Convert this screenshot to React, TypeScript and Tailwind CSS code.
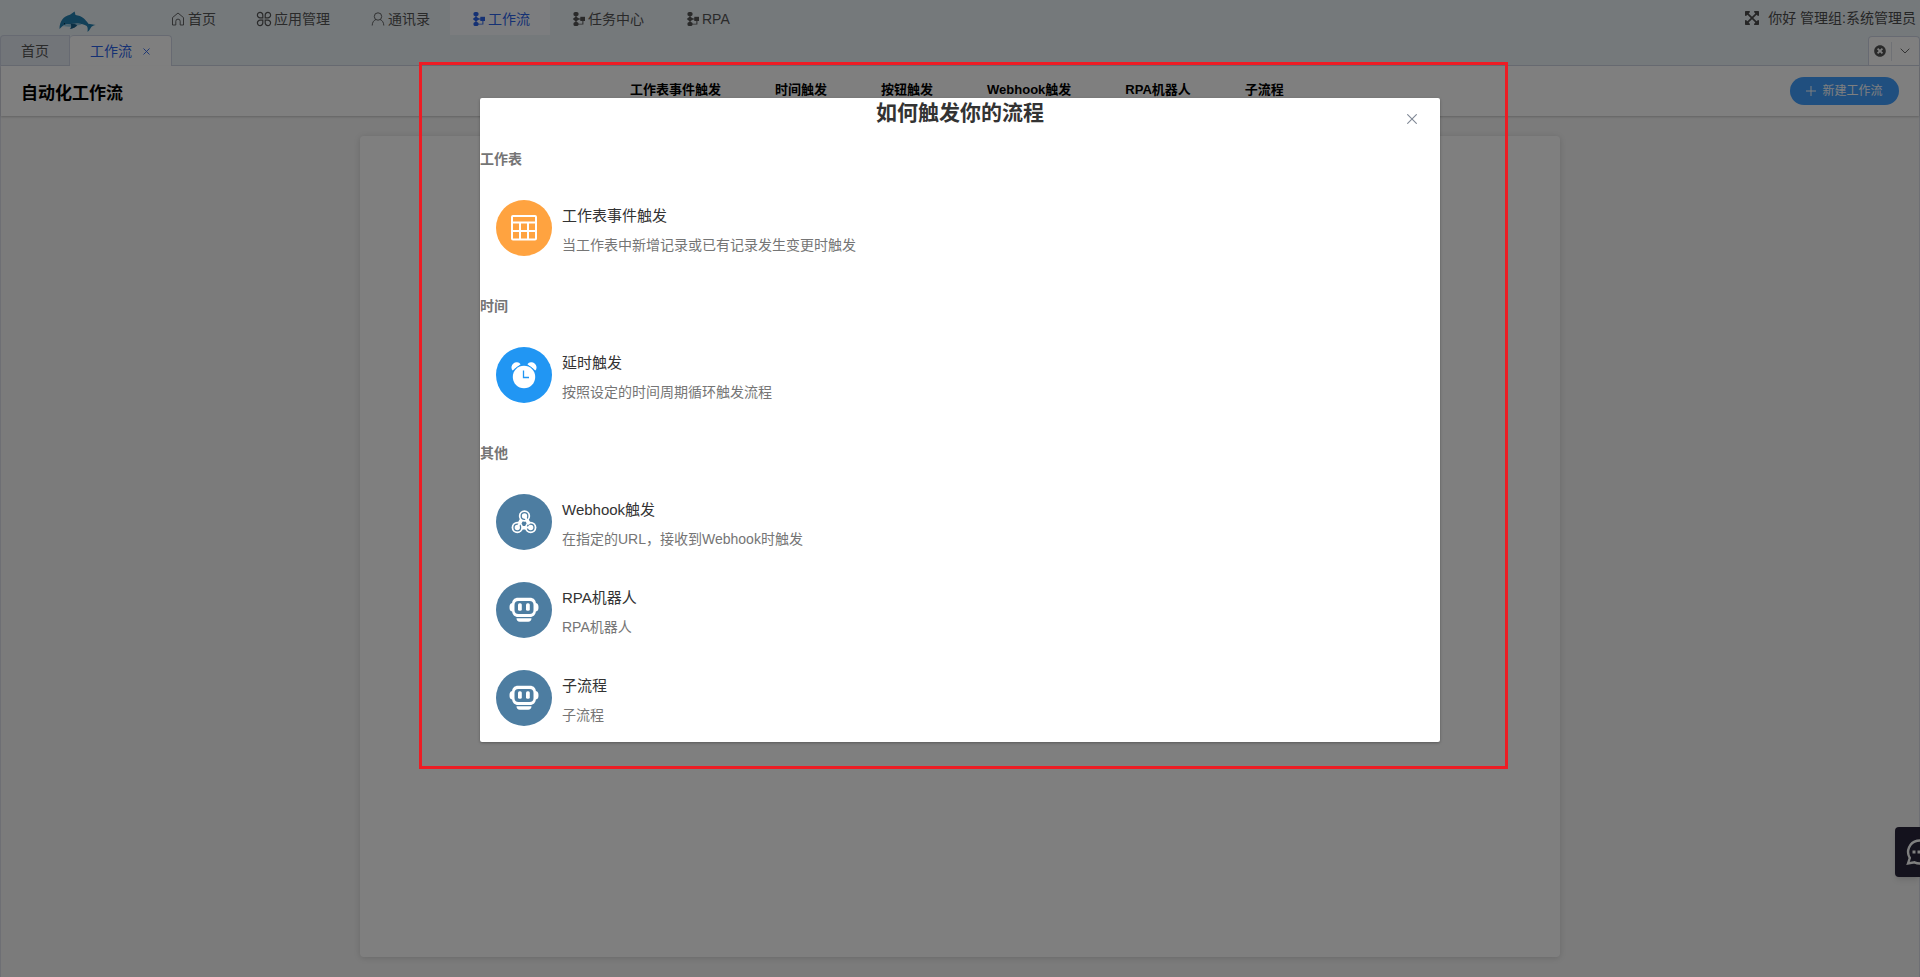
import type { ReactNode } from "react";
import { FaExpandArrowsAlt, FaTimesCircle } from "react-icons/fa";

function HomeIcon() {
  return (
    <svg width="14" height="14" viewBox="0 0 14 14" fill="none" stroke="currentColor" strokeWidth=".9">
      <path d="M4.800 13H1.500V5.600L7 1l5.500 4.600V13H9.200V9.300a2.200 2.200 0 0 0-4.400 0z" />
    </svg>
  );
}

function AppsIcon() {
  return (
    <svg width="16" height="16" viewBox="0 0 16 16" fill="none" stroke="currentColor" strokeWidth="1.200">
      <path d="M6.800 6.800H4.200a2.700 2.700 0 1 1 2.600-2.600zM9.200 6.800V4.200a2.700 2.700 0 1 1 2.600 2.600zM6.800 9.200v2.600a2.700 2.700 0 1 1-2.600-2.600zM9.200 9.200h2.600a2.700 2.700 0 1 1-2.600 2.600z" />
    </svg>
  );
}

function UserIcon() {
  return (
    <svg width="14" height="14" viewBox="0 0 14 14" fill="none" stroke="currentColor" strokeWidth=".9">
      <circle cx="7" cy="4.500" r="3.700" />
      <path d="M4.800 7.600C2.600 8.500 1.300 10.500 1.200 13.500M9.200 7.600c2.200.900 3.500 2.900 3.600 5.900" />
    </svg>
  );
}

function FlowIcon() {
  return (
    <svg width="14" height="14" viewBox="0 0 14 14" fill="currentColor">
      <rect x="2.500" y="0" width="5" height="4" rx="1.600" />
      <path d="M5 4.200 8.300 7 5 9.800 1.800 7z" />
      <rect x="2.500" y="10" width="5" height="4" rx="1.600" />
      <rect x="9.300" y="4.800" width="4.700" height="4.200" />
      <path d="M4.500 2h1v10h-1zM7 6.500h3v1H7zM11.400 8h1v4.600H7v-.900h4.400z" />
    </svg>
  );
}

function Dolphin() {
  return (
    <svg width="38" height="22" viewBox="0 0 38 22">
      <path d="M.5 18C.5 10.500 4.500 5 11 3.800L15.600.5l.9 3.600c6.500.8 10 4.400 12.800 8.700l7.500 1.300c-2.200.2-4.300 1.400-5.100 2.800-.8 1.400-2 3.300-3.300 3.900.5-2.200.5-4.300-.6-5.800-3.300-2.200-7.800-3-11.800-2.200C10.500 12.600 6 13.200 3.300 15.200z" fill="#2480b0" />
      <path d="M3.300 15.200c3-2 7.200-2.400 11.700-2.300 3.500-.4 6-.2 8 .6-2 .6-5.500 1-7 1.500.3 1.400-3.500 3-5.500 2.900 1-.6 1.500-1.400 1.400-2.100-3.300-.3-5.600-.3-8.600-.6z" fill="#93c6e0" />
      <path d="M11.500 12.500c3 0 5.500.8 6.500 1.800-.6 1.700-4 3.500-7 3.500 1.500-1.200 1.500-3.300.5-5.300z" fill="#195e88" />
      <circle cx="5.500" cy="12.700" r=".6" fill="#0b2b40" />
    </svg>
  );
}

function TableIcon() {
  return (
    <svg width="26" height="26" viewBox="0 0 26 26" fill="none" stroke="#fff" strokeWidth="2">
      <rect x="1" y="1" width="24" height="23.500" rx="1" />
      <path d="M1 7.500h24M1 16h24M9 7.500v17M17 7.500v17" />
    </svg>
  );
}

function ClockIcon() {
  return (
    <svg width="26" height="27" viewBox="0 0 26 27">
      <path d="M1.600 8.600A4.800 4.800 0 0 1 9.600 2.200M24.400 8.600A4.800 4.800 0 0 0 16.400 2.200" fill="#fff" />
      <circle cx="13" cy="15" r="12.200" fill="#2196f3" />
      <circle cx="13" cy="15" r="11.200" fill="#fff" />
      <path d="M12.500 8.500v7h5.500" fill="none" stroke="#2196f3" strokeWidth="1.300" />
    </svg>
  );
}

function WebhookIcon() {
  const nodes = [
    [13.5, 7],
    [6.3, 18.5],
    [19.7, 18.5],
  ];
  return (
    <svg width="26" height="26" viewBox="0 0 26 26" fill="none">
      <path d="M11 10 8 15M13.500 7l5 8.500M19 18.700h-9" stroke="#fff" strokeWidth="3.600" />
      {nodes.map(([x, y]) => (
        <g key={x}>
          <circle cx={x} cy={y} r="5.700" fill="#fff" />
          <circle cx={x} cy={y} r="3.300" stroke="#4d7da1" strokeWidth="1.300" />
        </g>
      ))}
      <path d="M13.500 7l4.300 7.600M6.300 18.500 10 12M19.700 18.500H12" stroke="#fff" strokeWidth="2.200" strokeLinecap="round" />
    </svg>
  );
}

function RobotIcon() {
  return (
    <svg width="30" height="26" viewBox="0 0 30 26">
      <path d="M9 .7h12c3.500 0 5.500 2.200 5.900 5.200 2 .5 2.600 1.800 2.600 4.300s-.6 3.800-2.600 4.300c-.4 3-2.400 5.500-5.900 5.500H9c-3.500 0-5.500-2.500-5.900-5.500C1.100 14 .5 12.700.5 10.200s.6-3.800 2.600-4.300C3.500 2.900 5.500.7 9 .7z" fill="#fff" />
      <rect x="5.500" y="4" width="19" height="13" rx="4" fill="#4d7da1" />
      <rect x="9" y="6.200" width="3.800" height="7.500" rx="1.500" fill="#fff" />
      <rect x="17" y="6.200" width="3.800" height="7.500" rx="1.500" fill="#fff" />
      <path d="M7.500 21.200h15c0 2.200-1.300 3.600-3.300 3.600h-8.400c-2 0-3.300-1.400-3.300-3.600z" fill="#fff" />
    </svg>
  );
}

function NavItem({ icon, label, active }: { icon: ReactNode; label: string; active?: boolean }) {
  return (
    <li className={`flex h-[35px] items-center px-5 pt-[3px] ${active ? "bg-[#f9fbff] text-[#2b62e8]" : "text-[#555]"}`}>
      <span className="flex w-[18px] shrink-0 justify-center pr-[2px]">{icon}</span>
      <span className="whitespace-nowrap">{label}</span>
    </li>
  );
}

function Trigger({ icon, color, title, desc }: { icon: ReactNode; color: string; title: string; desc: string }) {
  return (
    <div className="flex h-[88px] items-center px-4">
      <span className={`flex size-14 items-center justify-center rounded-full ${color}`}>{icon}</span>
      <div className="ml-[10px] flex flex-col pt-[5px]">
        <span className="h-[29px] text-[15px] leading-[22px] text-[#333]">{title}</span>
        <span className="h-[22px] leading-[22px] text-[#757575]">{desc}</span>
      </div>
    </div>
  );
}

function Section({ label, children }: { label: string; children: ReactNode }) {
  return (
    <section>
      <h3 className="h-[59px] pt-[23px] leading-[22px] font-bold text-[#757575]">{label}</h3>
      {children}
    </section>
  );
}

const kinds = ["工作表事件触发", "时间触发", "按钮触发", "Webhook触发", "RPA机器人", "子流程"];

export default function App() {
  return (
    <div className="relative h-[977px] w-full overflow-hidden bg-[#f6f6f6] font-['Liberation_Sans','Noto_Sans_CJK_SC',sans-serif] text-sm">
      <div className="flex h-full flex-col">
        <header className="flex h-[35px] items-center justify-between bg-[#eaf2f7]">
          <div className="flex">
            <div className="flex w-[150px] pt-[11px] pl-[59px]">
              <Dolphin />
            </div>
            <ul className="flex">
              <NavItem icon={<HomeIcon />} label="首页" />
              <NavItem icon={<AppsIcon />} label="应用管理" />
              <NavItem icon={<UserIcon />} label="通讯录" />
              <NavItem icon={<FlowIcon />} label="工作流" active />
              <NavItem icon={<FlowIcon />} label="任务中心" />
              <NavItem icon={<FlowIcon />} label="RPA" />
            </ul>
          </div>
          <div className="flex items-center pt-px pr-[4px] text-[#4c4c4c]">
            <FaExpandArrowsAlt className="mr-[8px] size-4" />
            <span>你好 管理组:系统管理员</span>
          </div>
        </header>

        <div className="flex h-[31px] items-stretch justify-between border-b border-[#cfd5e4] bg-[#eaf2f7]">
          <div className="flex">
            <div className="flex w-[70px] items-center justify-center rounded-tl border-t border-r border-l border-[#cfd5e4] bg-[#e5eaf2] text-[#555]">
              首页
            </div>
            <div className="-mb-px flex w-[102px] items-center rounded-t border-t border-r border-[#cfd5e4] bg-white pl-5 text-[#2b62e8]">
              工作流
              <svg className="ml-[11px]" width="7" height="7" viewBox="0 0 7 7" stroke="currentColor" strokeWidth=".9">
                <path d="M.5.5l6 6M6.500.5l-6 6" />
              </svg>
            </div>
          </div>
          <div className="mt-px flex w-[52px] items-center rounded-t border-t border-r border-l border-[#cfd5e4] bg-white">
            <span className="flex h-[19px] w-[23px] items-center justify-center border-r border-[#dfe3ea] text-[#555]">
              <FaTimesCircle className="size-3" />
            </span>
            <svg className="ml-[8px]" width="10" height="6" viewBox="0 0 10 6" fill="none" stroke="#666">
              <path d="M.7.7 5 5 9.300.7" />
            </svg>
          </div>
        </div>

        <div className="flex grow flex-col border-x border-[#dcdfe9]">
          <div className="flex h-[50px] items-center justify-between bg-white pr-5 pl-5 shadow-[0_1px_2px_rgba(0,0,0,0.2)]">
            <h1 className="w-[609px] pt-[5px] text-[17px] leading-6 font-bold text-black">自动化工作流</h1>
            <ul className="flex grow gap-[54px] pb-px text-[13px] font-bold text-black">
              {kinds.map((kind) => (
                <li key={kind} className="whitespace-nowrap">
                  {kind}
                </li>
              ))}
            </ul>
            <button className="flex h-7 w-[109px] items-center justify-center gap-[6px] rounded-full bg-[#409eff] text-xs text-white">
              <svg width="10" height="10" viewBox="0 0 10 10" stroke="#fff">
                <path d="M5 0v10M0 5h10" />
              </svg>
              新建工作流
            </button>
          </div>
          <main className="mx-auto mt-5 h-[821px] w-[1200px] rounded bg-white shadow-[0_1px_6px_rgba(0,0,0,0.15)]" />
        </div>
      </div>

      <div className="absolute top-[827px] right-0 flex h-[50px] w-[25px] items-center overflow-hidden rounded-l bg-[#28243a] pl-[11px] shadow-md">
        <svg className="shrink-0" width="28" height="28" viewBox="0 0 28 28" fill="none" stroke="#fff" strokeWidth="2.400">
          <path d="M2 25.500 3.800 20A11.500 11.500 0 1 1 8.500 24.300z" />
          <path d="M6.500 14h3M11.500 14h3M16.500 14h3" strokeWidth="3" />
        </svg>
      </div>

      <div className="absolute inset-0 bg-black/50" />

      <div className="absolute top-[98px] left-[480px] h-[644px] w-[960px] rounded-[2px] bg-white shadow-[0_1px_3px_rgba(0,0,0,0.3)]">
        <h2 className="h-[27px] text-center text-[21px] leading-[29px] font-bold text-[#333]">如何触发你的流程</h2>
        <button className="absolute top-4 right-[23px]" aria-label="关闭">
          <svg width="10" height="10" viewBox="0 0 10 10" stroke="#7f8895" strokeWidth="1.100">
            <path d="M.3.3l9.400 9.400M9.700.3l-9.400 9.400" />
          </svg>
        </button>
        <Section label="工作表">
          <Trigger icon={<TableIcon />} color="bg-[#ffa340]" title="工作表事件触发" desc="当工作表中新增记录或已有记录发生变更时触发" />
        </Section>
        <Section label="时间">
          <Trigger icon={<ClockIcon />} color="bg-[#2196f3]" title="延时触发" desc="按照设定的时间周期循环触发流程" />
        </Section>
        <Section label="其他">
          <Trigger icon={<WebhookIcon />} color="bg-[#4d7da1]" title="Webhook触发" desc="在指定的URL，接收到Webhook时触发" />
          <Trigger icon={<RobotIcon />} color="bg-[#4d7da1]" title="RPA机器人" desc="RPA机器人" />
          <Trigger icon={<RobotIcon />} color="bg-[#4d7da1]" title="子流程" desc="子流程" />
        </Section>
      </div>

      <div className="pointer-events-none absolute top-[62px] left-[419px] h-[707px] w-[1089px] border-[3px] border-[#ed1c24]" />
    </div>
  );
}
